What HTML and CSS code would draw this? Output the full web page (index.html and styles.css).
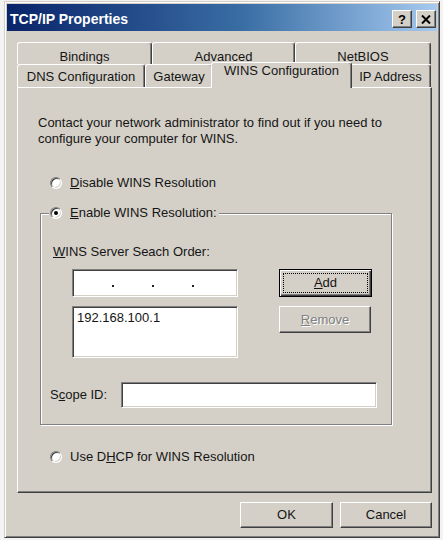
FILE: index.html
```html
<!DOCTYPE html>
<html>
<head>
<meta charset="utf-8">
<title>TCP/IP Properties</title>
<link rel="stylesheet" href="styles.css">
</head>
<body>
<div class="window">
  <div class="titlebar">
    <span class="title">TCP/IP Properties</span>
    <div class="tb-buttons">
      <span class="tb-btn help">?</span>
      <span class="tb-btn close"><svg width="10" height="9" viewBox="0 0 10 9"><path d="M1 0.5 L9 8.5 M9 0.5 L1 8.5" stroke="#000" stroke-width="2" fill="none"/></svg></span>
    </div>
  </div>
  <div class="content">
    <div class="tabs">
      <div class="tab-row back">
        <div class="tab w-bind">Bindings</div>
        <div class="tab w-adv">Advanced</div>
        <div class="tab w-net">NetBIOS</div>
      </div>
      <div class="tab-row front">
        <div class="tab w-dns">DNS Configuration</div>
        <div class="tab w-gw">Gateway</div>
        <div class="tab w-wins selected">WINS Configuration</div>
        <div class="tab w-ip">IP Address</div>
      </div>
    </div>
    <div class="panel">
      <p class="intro">Contact your network administrator to find out if you need to<br>configure your computer for WINS.</p>
      <div class="radio-row disable"><span class="radio"></span><span><u>D</u>isable WINS Resolution</span></div>
      <fieldset class="group">
        <legend><span class="radio checked"></span><span><u>E</u>nable WINS Resolution:</span></legend>
        <div class="search-label"><u>W</u>INS Server Seach Order:</div>
        <div class="server-grid">
          <div class="edit ip"><span class="dot"></span><span class="dot"></span><span class="dot"></span></div>
          <div class="btn default"><span class="focus"><u>A</u>dd</span></div>
          <div class="edit list">192.168.100.1</div>
          <div class="btn disabled"><span><u>R</u>emove</span></div>
        </div>
        <div class="scope-row">
          <span class="scope-label">S<u>c</u>ope ID:</span>
          <div class="edit scope"></div>
        </div>
      </fieldset>
      <div class="radio-row dhcp"><span class="radio"></span><span>Use D<u>H</u>CP for WINS Resolution</span></div>
    </div>
    <div class="dialog-buttons">
      <div class="btn ok">OK</div>
      <div class="btn cancel">Cancel</div>
    </div>
  </div>
</div>
</body>
</html>
```

FILE: styles.css
```css
body {
  margin: 0;
  background: #f3f3f3;
  font-family: "Liberation Sans", Arial, sans-serif;
  font-size: 13px;
  color: #151515;
}

.window {
  margin: 1px 0 0 4px;
  width: 436px;
  height: 537px;
  box-sizing: border-box;
  background: #d4d0c8;
  border: 1px solid;
  border-color: #d4d0c8 #404040 #404040 #d4d0c8;
  box-shadow: inset 1px 1px #fff, inset -1px -1px #808080;
  padding: 2px;
  display: flex;
  flex-direction: column;
}

.titlebar {
  height: 27px;
  box-sizing: border-box;
  background: linear-gradient(to right, #0a246a 0%, #3a6ea5 55%, #a6caf0 100%);
  display: flex;
  align-items: center;
  padding: 3px 1px 0 3px;
  color: #fff;
  font-weight: bold;
  font-size: 14px;
}

.title {
  flex: 1;
}

.tb-buttons {
  display: flex;
  gap: 4px;
}

.tb-btn {
  width: 20px;
  height: 18px;
  box-sizing: border-box;
  background: #d4d0c8;
  border: 1px solid;
  border-color: #fff #404040 #404040 #fff;
  box-shadow: inset -1px -1px #808080;
  display: flex;
  align-items: center;
  justify-content: center;
  color: #000;
  font-size: 13px;
  font-weight: bold;
  line-height: 1;
}

.content {
  padding: 11px 5px 0 10px;
}

.tabs {
  display: flex;
  flex-direction: column;
}

.tab-row {
  display: flex;
}

.tab-row.back {
  height: 22px;
}

.tab-row.front {
  height: 23px;
  align-items: flex-end;
}

.tab {
  box-sizing: border-box;
  height: 100%;
  background: #d4d0c8;
  border-top: 1px solid #fff;
  border-left: 1px solid #fff;
  border-right: 1px solid #404040;
  border-radius: 3px 3px 0 0;
  box-shadow: inset -1px 0 #808080;
  text-align: center;
  line-height: 16px;
}

.back .tab {
  padding-top: 6px;
}

.front .tab {
  height: 23px;
  padding-top: 4px;
}

.w-bind { width: 135px; }
.w-adv { width: 143px; }
.w-net { width: 136px; }
.w-dns { width: 128px; }
.w-gw { width: 68px; }
.w-wins { width: 137px; }
.w-ip { width: 81px; }

.front .tab.selected {
  position: relative;
  z-index: 2;
  height: 26px;
  width: 141px;
  margin: 0 -2px -1px -2px;
  padding-top: 0;
}

.panel {
  box-sizing: border-box;
  height: 406px;
  background: #d4d0c8;
  border: 1px solid;
  border-color: #fff #404040 #404040 #fff;
  box-shadow: inset -1px -1px #808080;
  display: flex;
  flex-direction: column;
  align-items: flex-start;
}

.intro {
  margin: 27px 0 0 20px;
  line-height: 16px;
}

.radio-row {
  display: flex;
  align-items: center;
  gap: 8px;
  height: 16px;
  line-height: 16px;
}

.radio-row.disable {
  margin: 28px 0 0 32px;
}

.radio-row.dhcp {
  margin: 24px 0 0 32px;
}

.radio {
  width: 12px;
  height: 12px;
  box-sizing: border-box;
  border-radius: 50%;
  background: #fff;
  border: 1px solid;
  border-color: #808080 #fff #fff #808080;
  box-shadow: inset 1px 1px #404040, inset -1px -1px #d4d0c8;
  display: flex;
  align-items: center;
  justify-content: center;
}

.radio.checked::after {
  content: "";
  width: 4px;
  height: 4px;
  border-radius: 50%;
  background: #000;
}

.group {
  margin: 14px 0 0 22px;
  width: 352px;
  box-sizing: border-box;
  padding: 0 0 16px 0;
  border: 1px solid #808080;
  box-shadow: inset 1px 1px #fff, 1px 1px #fff;
  min-width: 0;
}

.group legend {
  margin-left: 8px;
  padding: 0 2px 0 1px;
  display: flex;
  align-items: center;
  gap: 8px;
  height: 16px;
  line-height: 16px;
  background: #d4d0c8;
}

.search-label {
  margin: 23px 0 0 12px;
  line-height: 16px;
}

.server-grid {
  margin: 9px 0 0 31px;
  display: grid;
  grid-template-columns: 166px 93px;
  grid-template-rows: 28px 52px;
  column-gap: 41px;
  row-gap: 9px;
}

.edit {
  box-sizing: border-box;
  background: #fff;
  border: 1px solid;
  border-color: #808080 #fff #fff #808080;
  box-shadow: inset 1px 1px #404040, inset -1px -1px #d4d0c8;
}

.edit.ip {
  display: flex;
  align-items: flex-start;
  gap: 38px;
  padding: 15px 0 0 39px;
}

.edit.ip .dot {
  width: 2px;
  height: 2px;
  background: #222;
}

.edit.list {
  padding: 3px 0 0 4px;
  line-height: 16px;
}

.btn {
  box-sizing: border-box;
  background: #d4d0c8;
  border: 1px solid;
  border-color: #fff #404040 #404040 #fff;
  box-shadow: inset -1px -1px #808080;
  display: flex;
  align-items: center;
  justify-content: center;
  line-height: 16px;
}

.btn.default {
  border: 1px solid #000;
  box-shadow: inset 1px 1px #fff, inset -1px -1px #404040, inset -2px -2px #808080;
  padding: 3px;
}

.btn.default .focus {
  flex: 1;
  align-self: stretch;
  border: 1px dotted #000;
  display: flex;
  align-items: center;
  justify-content: center;
}

.btn.disabled {
  align-self: start;
  width: 92px;
  height: 27px;
  color: #808080;
  text-shadow: 1px 1px #fff;
}

.scope-row {
  margin: 24px 0 0 9px;
  display: flex;
  align-items: center;
}

.scope-label {
  width: 71px;
  line-height: 16px;
}

.edit.scope {
  width: 256px;
  height: 26px;
}

.dialog-buttons {
  display: flex;
  justify-content: flex-end;
  gap: 7px;
  margin-top: 9px;
}

.dialog-buttons .btn {
  height: 26px;
}

.btn.ok {
  width: 93px;
}

.btn.cancel {
  width: 92px;
}
```
